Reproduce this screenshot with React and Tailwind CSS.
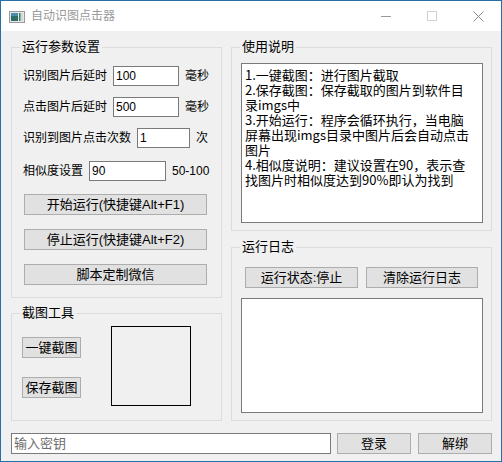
const GROUP = 'relative border border-[#dcdcdc]';
const LEGEND = 'absolute -top-[9px] left-[8px] px-[2px] bg-[#f0f0f0] text-[13px] leading-[16px] text-black';
const BTN = 'h-[21px] border border-[#adadad] bg-[#e1e1e1] text-[13px] leading-[19px] text-black flex items-center justify-center';
const INPUT = 'h-[20px] border border-[#7a7a7a] bg-white text-[12px] leading-[18px] pl-[2px] text-black';

const HELP_LINES = [
  '1.一键截图：进行图片截取',
  '2.保存截图：保存截取的图片到软件目',
  '录imgs中',
  '3.开始运行：程序会循环执行，当电脑',
  '屏幕出现imgs目录中图片后会自动点击',
  '图片',
  '4.相似度说明：建议设置在90，表示查',
  '找图片时相似度达到90%即认为找到',
];

function ParamRow({ label, value, inputW, unit, className = '' }) {
  return (
    <div className={`flex items-center gap-[6px] ${className}`}>
      <span className="text-[12px] leading-[20px] whitespace-nowrap">{label}</span>
      <div className={`${INPUT} ${inputW}`}>{value}</div>
      <span className="text-[12px] leading-[20px] whitespace-nowrap">{unit}</span>
    </div>
  );
}

function AppIcon() {
  return (
    <svg width="16" height="12" viewBox="0 0 16 12">
      <rect x="0.5" y="0.5" width="15" height="11" fill="#e8e8e8" stroke="#9a9a9a" />
      <rect x="2" y="2" width="7" height="8" fill="#2f6e6a" />
      <rect x="2" y="2" width="7" height="3" fill="#4a8fb0" />
      <rect x="10" y="2" width="1.5" height="8" fill="#3d7d5a" />
      <rect x="12" y="2" width="2" height="8" fill="#cfd8d8" />
    </svg>
  );
}

export default function App() {
  return (
    <div className="w-[502px] h-[462px] border border-[#2a6ea8] bg-[#f0f0f0] flex flex-col font-['Liberation_Sans','Noto_Sans_CJK_SC',sans-serif] text-black overflow-hidden">
      {/* title bar */}
      <div className="h-[30px] bg-white flex items-center shrink-0">
        <div className="ml-[8px] mt-[1px]"><AppIcon /></div>
        <span className="ml-[6px] text-[12px] text-[#9a9a9a]">自动识图点击器</span>
        <div className="ml-auto flex items-center h-full">
          <div className="w-[46px] flex justify-center">
            <div className="w-[10px] h-px bg-[#9a9a9a] mt-[1px]" />
          </div>
          <div className="w-[46px] flex justify-center">
            <div className="w-[10px] h-[10px] border border-[#d0d0d0]" />
          </div>
          <div className="w-[46px] flex justify-center">
            <svg width="11" height="11" viewBox="0 0 11 11">
              <path d="M0.5 0.5 L10.5 10.5 M10.5 0.5 L0.5 10.5" stroke="#8a8a8a" strokeWidth="1" />
            </svg>
          </div>
        </div>
      </div>

      {/* body */}
      <div className="flex gap-[9px] pl-[10px] pr-[9px] pt-[16px]">
        {/* left column */}
        <div className="w-[211px] flex flex-col">
          <div className={`${GROUP} h-[251px] pt-[18px] pl-[11px]`}>
            <span className={LEGEND}>运行参数设置</span>
            <ParamRow label="识别图片后延时" value="100" inputW="w-[66px]" unit="毫秒" />
            <ParamRow label="点击图片后延时" value="500" inputW="w-[66px]" unit="毫秒" className="mt-[11px]" />
            <ParamRow label="识别到图片点击次数" value="1" inputW="w-[53px]" unit="次" className="mt-[11px]" />
            <ParamRow label="相似度设置" value="90" inputW="w-[77px]" unit="50-100" className="mt-[13px]" />
            <div className={`${BTN} w-[183px] ml-[1px] mt-[13px]`}>开始运行(快捷键Alt+F1)</div>
            <div className={`${BTN} w-[183px] ml-[1px] mt-[14px]`}>停止运行(快捷键Alt+F2)</div>
            <div className={`${BTN} w-[183px] ml-[1px] mt-[14px]`}>脚本定制微信</div>
          </div>

          <div className={`${GROUP} h-[108px] mt-[15px] flex pl-[10px] pt-[12px]`}>
            <span className={LEGEND}>截图工具</span>
            <div className="flex flex-col pt-[11px]">
              <div className={`${BTN} w-[59px]`}>一键截图</div>
              <div className={`${BTN} w-[59px] mt-[19px]`}>保存截图</div>
            </div>
            <div className="ml-[30px] w-[80px] h-[80px] border border-black" />
          </div>
        </div>

        {/* right column */}
        <div className="w-[261px] flex flex-col">
          <div className={`${GROUP} h-[184px] pt-[15px] pl-[9px]`}>
            <span className={LEGEND}>使用说明</span>
            <div className="w-[242px] h-[160px] border border-[#7a7a7a] bg-white pt-[3px] pl-[3px] text-[13px] leading-[15px] font-['Noto_Sans_CJK_SC',sans-serif]">
              {HELP_LINES.map((l) => (
                <div key={l} className="whitespace-nowrap">{l}</div>
              ))}
            </div>
          </div>

          <div className={`${GROUP} h-[174px] mt-[16px] pt-[19px] pl-[9px]`}>
            <span className={LEGEND}>运行日志</span>
            <div className="flex gap-[8px] pl-[4px]">
              <div className={`${BTN} w-[113px]`}>运行状态:停止</div>
              <div className={`${BTN} w-[112px]`}>清除运行日志</div>
            </div>
            <div className="w-[242px] h-[115px] mt-[10px] border border-[#7a7a7a] bg-white" />
          </div>
        </div>
      </div>

      {/* bottom bar */}
      <div className="flex items-center pl-[10px] mt-[12px]">
        <div className="w-[320px] h-[21px] border border-[#7a7a7a] bg-white pl-[2px] text-[13px] leading-[19px] text-[#6d6d6d]">输入密钥</div>
        <div className={`${BTN} w-[74px] ml-[6px]`}>登录</div>
        <div className={`${BTN} w-[74px] ml-[7px]`}>解绑</div>
      </div>
    </div>
  );
}
